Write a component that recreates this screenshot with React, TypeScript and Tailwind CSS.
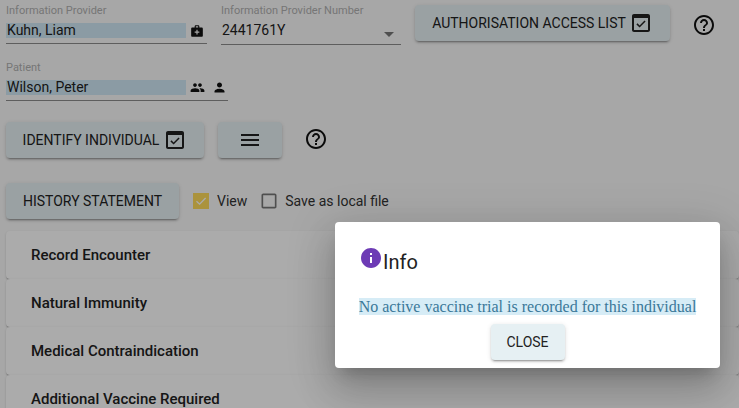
import React from 'react';
import { MdArrowDropDown, MdCheckBoxOutlineBlank, MdHelpOutline, MdInfo, MdMedicalServices, MdMenu, MdPeople, MdPerson } from 'react-icons/md';

const WindowCheck = () => (
  <svg width="24" height="24" viewBox="0 0 24 24" fill="currentColor">
    <path d="M19 3H5c-1.1 0-2 .9-2 2v14c0 1.1.9 2 2 2h14c1.1 0 2-.9 2-2V5c0-1.1-.9-2-2-2zm0 16H5V7h14v12z" />
    <path d="M10.6 16.6 7.4 13.4l1.1-1.1 2.1 2.1 4.9-4.9 1.1 1.1z" />
  </svg>
);

const GoldCheck = () => (
  <svg width="16" height="16" viewBox="0 0 16 16" className="ml-[14px] shrink-0">
    <rect width="16" height="16" fill="#ffdc5c" />
    <path d="M3.5 8.2 6.6 11.2 12.6 5" fill="none" stroke="#ffffff" strokeWidth="1.3" />
  </svg>
);

const btn =
  'flex items-center justify-center h-9 rounded bg-[#e6f0f3] text-sm font-normal text-[#222] shadow-[0_3px_1px_-2px_rgba(0,0,0,0.2),0_2px_2px_0_rgba(0,0,0,0.14),0_1px_5px_0_rgba(0,0,0,0.12)]';

const Field = ({ label, value, width, icons }: { label: string; value: string; width: string; icons: React.ReactNode }) => (
  <div className={width}>
    <div className="h-[14px] text-[11px] leading-[14px] text-[#b0b0b0]">{label}</div>
    <div className="mt-[5px] flex h-[21px] border-b border-[#8c8c8c]">
      <span className="h-[15px] w-[180px] bg-[#cfe8f5] pl-px text-sm leading-[15px] text-[#222]">{value}</span>
      {icons}
    </div>
  </div>
);

const Panel = ({ title }: { title: string }) => (
  <div className="h-12 shrink-0 rounded bg-white pl-[25px] text-[15px] font-medium leading-[48px] text-[#222] shadow-[0_2px_1px_-1px_rgba(0,0,0,0.2),0_1px_1px_0_rgba(0,0,0,0.14),0_1px_3px_0_rgba(0,0,0,0.12)]">
    {title}
  </div>
);

export default function App() {
  return (
    <div className="relative h-[408px] w-[739px] overflow-hidden bg-[#fafafa] font-['Roboto',sans-serif]">
      <div className="flex h-[61px] pl-[6px] pt-[4px]">
        <Field
          label="Information Provider"
          value="Kuhn, Liam"
          width="w-[201px]"
          icons={<MdMedicalServices size={14} className="ml-[4px] mt-[1px] text-[#111]" />}
        />
        <div className="ml-[14px] w-[180px]">
          <div className="h-[14px] text-[11px] leading-[14px] text-[#b0b0b0]">Information Provider Number</div>
          <div className="mt-[5px] flex h-[22px] items-start justify-between border-b border-[#8c8c8c] pl-px text-sm leading-[15px] text-[#222]">
            2441761Y
            <MdArrowDropDown size={24} className="-mt-[1px] text-[#777]" />
          </div>
        </div>
        <button className={`${btn} ml-[14px] mt-[1px] w-[255px] gap-[3px]`}>
          AUTHORISATION ACCESS LIST <WindowCheck />
        </button>
        <MdHelpOutline size={24} className="ml-[22px] mt-[9px] text-[#111]" />
      </div>
      <div className="flex pl-[6px]">
        <Field
          label="Patient"
          value="Wilson, Peter"
          width="w-[222px]"
          icons={
            <div className="ml-[4px] flex gap-[7px] text-[#111]">
              <MdPeople size={15} />
              <MdPerson size={15} />
            </div>
          }
        />
      </div>
      <div className="mt-[21px] flex items-center pl-[6px]">
        <button className={`${btn} w-[198px] gap-[4px]`}>
          IDENTIFY INDIVIDUAL <WindowCheck />
        </button>
        <button className={`${btn} ml-[14px] w-[64px]`}>
          <MdMenu size={24} />
        </button>
        <MdHelpOutline size={24} className="ml-[22px] -mt-[2px] text-[#111]" />
      </div>
      <div className="mt-[25px] flex items-center pl-[6px]">
        <button className={`${btn} w-[173px]`}>HISTORY STATEMENT</button>
        <GoldCheck />
        <span className="ml-[8px] text-sm text-[#333]">View</span>
        <MdCheckBoxOutlineBlank size={20} className="ml-[12px] text-[#777]" />
        <span className="ml-[6px] text-sm text-[#333]">Save as local file</span>
      </div>
      <div className="ml-[6px] mt-[12px] flex flex-col">
        <Panel title="Record Encounter" />
        <Panel title="Natural Immunity" />
        <Panel title="Medical Contraindication" />
        <Panel title="Additional Vaccine Required" />
      </div>

      <div className="absolute inset-0 bg-black/33" />

      <div className="absolute left-[335px] top-[222px] h-[146px] w-[385px] rounded bg-white shadow-[0_11px_15px_-7px_rgba(0,0,0,0.2),0_24px_38px_3px_rgba(0,0,0,0.14),0_9px_46px_8px_rgba(0,0,0,0.12)]">
        <div className="flex pl-[24px] pt-[24px]">
          <MdInfo size={24} className="text-[#6d3bb5]" />
          <span className="mt-[4px] text-xl leading-[24px] text-[#222]">Info</span>
        </div>
        <div className="mt-[24px] text-center font-['Liberation_Serif',serif] text-base leading-[18px] text-[#3a7899]">
          <span className="bg-[#d6ecf6]">No active vaccine trial is recorded for this individual</span>
        </div>
        <button className={`${btn} mx-auto mt-[8px] w-[74px] bg-[#e4edf0]`}>CLOSE</button>
      </div>
    </div>
  );
}
